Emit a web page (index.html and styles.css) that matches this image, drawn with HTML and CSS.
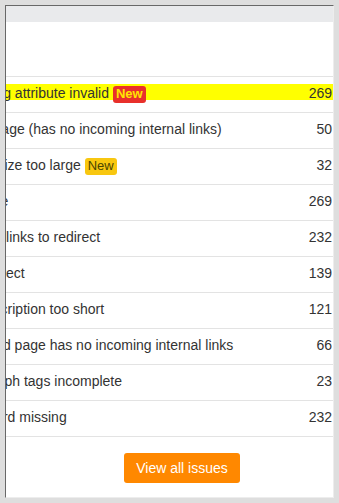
FILE: index.html
```html
<!DOCTYPE html>
<html lang="en">
<head>
    <meta charset="UTF-8">
    <meta name="viewport" content="width=device-width, initial-scale=1.0">
    <title>Site Audit - Top issues</title>
    <link rel="stylesheet" href="styles.css">
</head>
<body>
    <div class="frame">
        <div class="frame-top"></div>
        <div class="panel">
            <div class="panel-head"></div>
            <ul class="issues">
                <li class="issue issue-hit">
                    <div class="issue-line">
                        <span class="issue-name">HTML lang attribute invalid <span class="badge badge-hot">New</span></span>
                        <span class="issue-count">269</span>
                    </div>
                </li>
                <li class="issue">
                    <div class="issue-line">
                        <span class="issue-name">Orphan page (has no incoming internal links)</span>
                        <span class="issue-count">50</span>
                    </div>
                </li>
                <li class="issue">
                    <div class="issue-line">
                        <span class="issue-name">CSS file size too large <span class="badge badge-new">New</span></span>
                        <span class="issue-count">32</span>
                    </div>
                </li>
                <li class="issue">
                    <div class="issue-line">
                        <span class="issue-name">Slow page</span>
                        <span class="issue-count">269</span>
                    </div>
                </li>
                <li class="issue">
                    <div class="issue-line">
                        <span class="issue-name">Page has links to redirect</span>
                        <span class="issue-count">232</span>
                    </div>
                </li>
                <li class="issue">
                    <div class="issue-line">
                        <span class="issue-name">Meta redirect</span>
                        <span class="issue-count">139</span>
                    </div>
                </li>
                <li class="issue">
                    <div class="issue-line">
                        <span class="issue-name">Meta description too short</span>
                        <span class="issue-count">121</span>
                    </div>
                </li>
                <li class="issue">
                    <div class="issue-line">
                        <span class="issue-name">Redirected page has no incoming internal links</span>
                        <span class="issue-count">66</span>
                    </div>
                </li>
                <li class="issue">
                    <div class="issue-line">
                        <span class="issue-name">Open Graph tags incomplete</span>
                        <span class="issue-count">23</span>
                    </div>
                </li>
                <li class="issue">
                    <div class="issue-line">
                        <span class="issue-name">Twitter card missing</span>
                        <span class="issue-count">232</span>
                    </div>
                </li>
            </ul>
            <div class="panel-foot">
                <a href="#" class="btn-all">View all issues</a>
            </div>
        </div>
    </div>
</body>
</html>
```

FILE: styles.css
```css
body {
    font-family: 'Liberation Sans', Arial, sans-serif;
    font-size: 14px;
    margin: 0;
    padding: 5px 0 0 5px;
    background-color: #dedede;
    color: #333333;
}
.frame {
    width: 327px;
    height: 491px;
    border-top: 1px solid #686868;
    border-left: 1px solid #686868;
    border-right: 1px solid #ededed;
    border-bottom: 1px solid #ededed;
    background-color: #ffffff;
    overflow: hidden;
}
.frame-top {
    height: 16px;
    background-color: #e9eaec;
}
.panel-head {
    height: 54px;
    border-bottom: 1px solid #e3e3e3;
}
/* list is scrolled sideways, the start of each name sits out of view */
.issues {
    list-style: none;
    margin: 0 0 0 -63px;
    padding: 0;
}
.issue {
    height: 28px;
    padding-top: 7px;
    border-bottom: 1px solid #e3e3e3;
}
.issue-line {
    display: flex;
    justify-content: space-between;
    height: 16px;
    line-height: 18px;
    white-space: nowrap;
}
.issue-hit .issue-line {
    background-color: #ffff00;
}
.issue-count {
    padding-right: 1px;
}
.badge {
    display: inline-block;
    padding: 0 3px 2px;
    line-height: 15px;
    font-size: 13px;
    border-radius: 3px;
}
.badge-hot {
    background-color: #e8302b;
    color: #ffe500;
    font-weight: bold;
}
.badge-new {
    background-color: #f8c710;
    color: #4a4400;
}
.panel-foot {
    display: flex;
    justify-content: center;
    padding: 16px 0 14px 25px;
}
.btn-all {
    display: inline-block;
    height: 30px;
    line-height: 30px;
    padding: 0 12px;
    background-color: #ff8800;
    color: #ffffff;
    text-decoration: none;
    border-radius: 3px;
}
```
